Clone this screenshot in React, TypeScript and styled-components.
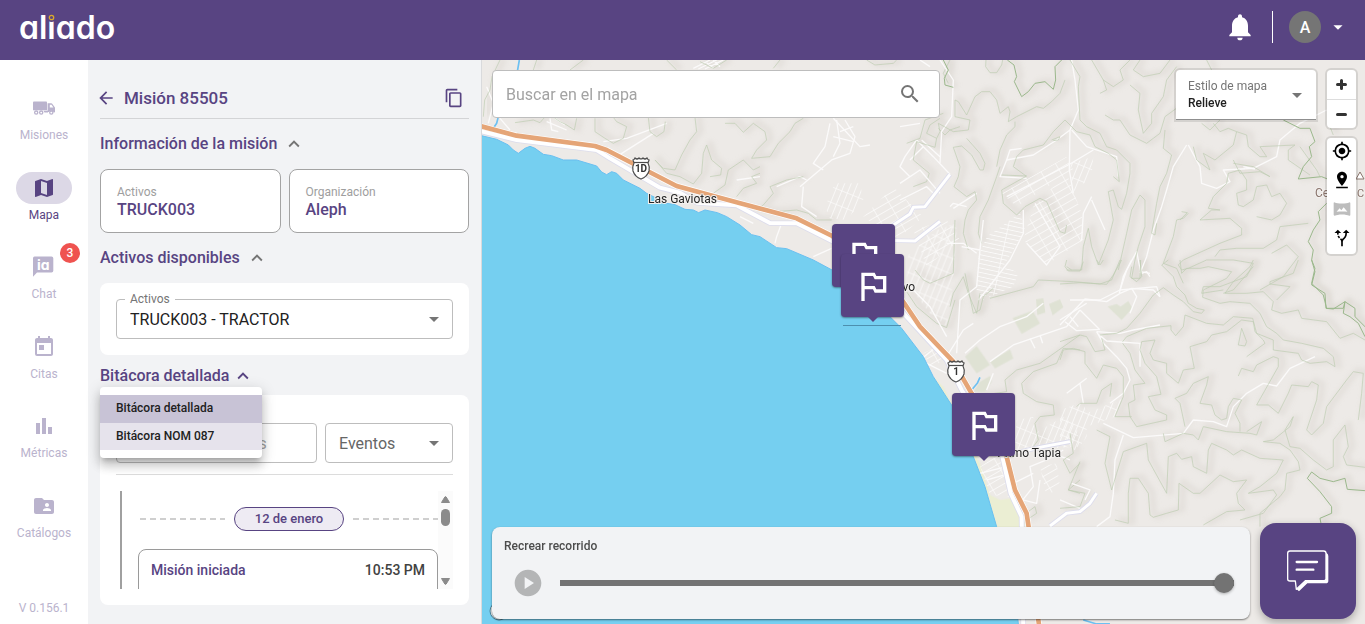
import React from 'react';
import styled, { createGlobalStyle } from 'styled-components';
import {
  MdAltRoute,
  MdArrowBack,
  MdArrowDropDown,
  MdContentCopy,
  MdExpandLess,
  MdFolderShared,
  MdMap,
  MdMyLocation,
  MdNotifications,
  MdOutlinedFlag,
  MdPinDrop,
  MdPlayCircle,
  MdSearch,
  MdToday,
  MdVrpano,
} from 'react-icons/md';

const purple = '#584482';
const lilac = '#bab3cd';

const GlobalStyle = createGlobalStyle`
  * { box-sizing: border-box; }
  body {
    margin: 0;
    font-family: Roboto, "Liberation Sans", sans-serif;
    color: #212121;
    overflow: hidden;
  }
  button, input, select { font-family: inherit; }
  button { border: 0; padding: 0; background: none; cursor: pointer; }
`;

/* ---------- shell ---------- */

const Shell = styled.div`
  display: flex;
  flex-direction: column;
  height: 100vh;
`;

const Header = styled.header`
  flex: none;
  display: flex;
  align-items: center;
  justify-content: space-between;
  height: 60px;
  padding: 0 16px 6px 19px;
  background: ${purple};
  color: #fff;
`;

const Logo = styled.a`
  position: relative;
  padding-top: 2px;
  color: #fff;
  font: 600 32px/40px Inter, sans-serif;
  font-feature-settings: "cv11";
  text-decoration: none;
`;

const LogoRing = styled.svg`
  position: absolute;
  left: 28px;
  top: 7px;
  width: 9px;
  height: 9px;
`;

const HeaderTools = styled.div`
  display: flex;
  align-items: center;
`;

const HeaderButton = styled.button`
  display: flex;
  color: #fff;
`;

const HeaderRule = styled.span`
  width: 1px;
  height: 32px;
  margin: 0 16px;
  background: #fff;
`;

const Avatar = styled.span`
  display: grid;
  place-items: center;
  width: 32px;
  height: 32px;
  margin-right: 6px;
  border-radius: 50%;
  background: #757575;
  font-size: 16px;
  font-weight: 500;
`;

const Body = styled.div`
  flex: 1;
  display: flex;
  min-height: 0;
`;

/* ---------- navigation ---------- */

const Nav = styled.nav`
  flex: none;
  display: flex;
  flex-direction: column;
  width: 88px;
  padding: 32px 0 6px;
  background: #fff;
`;

const NavList = styled.ul`
  flex: 1;
  display: flex;
  flex-direction: column;
  justify-content: space-between;
  margin: 0;
  padding: 0;
  list-style: none;
`;

const NavLink = styled.a<{ $active?: boolean }>`
  position: relative;
  display: flex;
  flex-direction: column;
  align-items: center;
  color: ${(p) => (p.$active ? purple : lilac)};
  font-size: 12px;
  line-height: 22px;
  text-decoration: none;
`;

const NavPill = styled.span<{ $active?: boolean }>`
  display: grid;
  place-items: center;
  width: 56px;
  height: 32px;
  border-radius: 16px;
  background: ${(p) => (p.$active ? '#dcd8e6' : 'transparent')};
`;

const NavBadge = styled.span`
  position: absolute;
  top: -8px;
  right: 8px;
  width: 20px;
  border-radius: 10px;
  background: #ef5350;
  color: #fff;
  font-weight: 500;
  line-height: 20px;
  text-align: center;
`;

const Version = styled.p`
  margin: 0;
  padding-top: 54px;
  color: ${lilac};
  font-size: 12px;
  line-height: 20px;
  text-align: center;
`;

/* ---------- mission panel ---------- */

const Panel = styled.aside`
  flex: none;
  width: 394px;
  padding: 18px 12px;
  border-right: 1px solid #d9dadc;
  background: #f2f3f5;
`;

const PanelHead = styled.div`
  display: flex;
  align-items: center;
  height: 41px;
  border-bottom: 1px solid #d3d4d6;
  color: ${purple};
`;

const PanelTitle = styled.h1`
  flex: 1;
  margin: 0 0 0 8px;
  font-size: 17px;
  font-weight: 500;
  line-height: 24px;
`;

const IconButton = styled.button`
  display: flex;
  color: inherit;
`;

const CopyButton = styled(IconButton)`
  margin-right: 5px;
`;

const BackButton = styled(IconButton)`
  margin-left: -4px;
`;

const SectionHead = styled.h2<{ $tight?: boolean }>`
  position: relative;
  margin: ${(p) => (p.$tight ? '9px 0 7px' : '13px 0')};
  font-size: 16px;
  font-weight: 500;
  line-height: 24px;
`;

const SectionToggle = styled.button<{ $tight?: boolean }>`
  display: flex;
  align-items: center;
  gap: ${(p) => (p.$tight ? '2px' : '6px')};
  color: ${purple};
  font-size: 16px;
  font-weight: 500;
  line-height: 24px;

  svg { color: ${(p) => (p.$tight ? purple : '#757575')}; }
`;

const FactGrid = styled.dl`
  display: grid;
  grid-template-columns: 1fr 1fr;
  gap: 8px;
  margin: 0;
`;

const Fact = styled.div`
  height: 64px;
  padding: 13px 16px;
  border: 1px solid #a3a3a3;
  border-radius: 8px;
  background: #fff;
`;

const FactLabel = styled.dt`
  color: #9e9e9e;
  font-size: 12px;
  line-height: 18px;
`;

const FactValue = styled.dd`
  margin: 0;
  color: ${purple};
  font-size: 16px;
  font-weight: 500;
  line-height: 18px;
`;

const Card = styled.div<{ $log?: boolean }>`
  padding: ${(p) => (p.$log ? '28px 16px 16px' : '16px')};
  border-radius: 8px;
  background: #fff;
`;

const Field = styled.div`
  position: relative;
  min-width: 0;
  color: #757575;

  svg {
    position: absolute;
    right: 7px;
    top: 8px;
    pointer-events: none;
  }
`;

const FieldLabel = styled.label`
  position: absolute;
  left: 9px;
  top: -8px;
  padding: 0 5px;
  background: #fff;
  color: #757575;
  font-size: 12px;
  line-height: 16px;
`;

const Select = styled.select<{ $muted?: boolean }>`
  display: block;
  width: 100%;
  height: 40px;
  padding: 0 13px;
  border: 1px solid #bdbdbd;
  border-radius: 4px;
  appearance: none;
  background: #fff;
  color: ${(p) => (p.$muted ? '#666' : '#212121')};
  font-size: 16px;
`;

const TextInput = styled.input`
  display: block;
  width: 100%;
  height: 40px;
  padding: 0 13px;
  border: 1px solid #bdbdbd;
  border-radius: 4px;
  background: #fff;
  font-size: 16px;

  &::placeholder { color: #a2a2a2; opacity: 1; }
`;

const Filters = styled.div`
  display: grid;
  grid-template-columns: 201px 1fr;
  gap: 8px;
  padding-bottom: 11px;
  border-bottom: 1px solid #dcdcdc;
`;

const Menu = styled.div`
  position: absolute;
  z-index: 2;
  left: 0;
  top: 23px;
  width: 162px;
  padding: 8px 0;
  border-radius: 4px;
  background: #fff;
  box-shadow: 0 5px 5px -3px rgba(0, 0, 0, .2), 0 8px 10px 1px rgba(0, 0, 0, .14), 0 3px 14px 2px rgba(0, 0, 0, .12);
`;

const MenuItem = styled.button<{ $selected?: boolean }>`
  display: block;
  width: 100%;
  padding: 0 16px ${(p) => (p.$selected ? '2px' : '1px')};
  background: ${(p) => (p.$selected ? '#c8c3d6' : '#e6e3ec')};
  color: #212121;
  font-size: 12px;
  font-weight: 500;
  line-height: 26px;
  text-align: left;
`;

const LogViewport = styled.div`
  display: flex;
  height: 98px;
  margin-top: 16px;
  padding-left: 4px;
  overflow: hidden;
`;

const LogBody = styled.div`
  flex: 1;
  padding: 16px 0 0 16px;
  border-left: 2px solid #a0a0a0;
`;

const DayRow = styled.div`
  display: flex;
  align-items: center;
  gap: 9px;
  padding-left: 2px;
`;

const DayDashes = styled.span`
  flex: 1;
  height: 2px;
  background: repeating-linear-gradient(to right, #cfcfcf 0 6px, transparent 6px 10px);
`;

const DayChip = styled.span`
  width: 110px;
  border: 1px solid ${purple};
  border-radius: 12px;
  background: #eeebf3;
  color: ${purple};
  font-size: 13px;
  font-weight: 500;
  line-height: 22px;
  text-align: center;
`;

const LogEntry = styled.div`
  display: flex;
  justify-content: space-between;
  height: 80px;
  margin-top: 18px;
  padding: 10px 12px;
  border: 1px solid #9a9a9a;
  border-radius: 8px;
  color: #424242;
  font-size: 14px;
  font-weight: 500;
  line-height: 20px;
`;

const LogName = styled.span`
  color: ${purple};
`;

const ScrollRail = styled.div`
  display: flex;
  flex-direction: column;
  align-items: center;
  width: 15px;
  padding: 5px 0 4px;
  background: #fbfbfb;
`;

const ScrollThumb = styled.span`
  width: 9px;
  height: 17px;
  margin: 6px 0 auto;
  border-radius: 5px;
  background: #8b8b8b;
`;

/* ---------- map ---------- */

const MapArea = styled.main`
  position: relative;
  flex: 1;
  display: flex;
  flex-direction: column;
  justify-content: space-between;
  min-width: 0;
  overflow: hidden;
  background: #edeae7;
`;

const Terrain = styled.svg`
  position: absolute;
  inset: 0;
  width: 100%;
  height: 100%;
`;

const Marker = styled.button<{ $x: number; $y: number }>`
  position: absolute;
  left: ${(p) => p.$x}px;
  top: ${(p) => p.$y}px;
  display: grid;
  place-items: center;
  width: 63px;
  height: 63px;
  border-radius: 4px;
  background: ${purple};
  color: #fff;
  box-shadow: 0 1px 2px rgba(0, 0, 0, .4);

  &::after {
    content: "";
    position: absolute;
    left: 27px;
    top: 63px;
    border: 5px solid transparent;
    border-top-color: ${purple};
    border-bottom: 0;
  }
`;

const MapTop = styled.div`
  position: relative;
  display: flex;
  align-items: flex-start;
  justify-content: space-between;
  padding: 10px 9px 0 10px;
`;

const SearchBox = styled.div`
  display: flex;
  align-items: center;
  width: 448px;
  height: 48px;
  padding: 0 17px 0 13px;
  border: 1px solid #bdbdbd;
  border-radius: 4px;
  background: #fff;
  color: #757575;
`;

const SearchInput = styled.input`
  flex: 1;
  min-width: 0;
  padding: 0;
  border: 0;
  outline: 0;
  background: none;
  font-size: 16px;

  &::placeholder { color: #a3a3a3; opacity: 1; }
`;

const MapTools = styled.div`
  display: flex;
  align-items: flex-start;
  gap: 11px;
`;

const StyleField = styled.div`
  position: relative;
  width: 140px;
  height: 50px;
  padding: 8px 12px 0;
  border-bottom: 1px solid #8f8f8f;
  border-radius: 4px 4px 0 0;
  background: #fff;
  color: #757575;
  box-shadow: 0 0 0 2px rgba(0, 0, 0, .1);

  svg { position: absolute; right: 7px; top: 13px; pointer-events: none; }
`;

const StyleLabel = styled.label`
  display: block;
  font-size: 12px;
  line-height: 16px;
`;

const StyleSelect = styled.select`
  display: block;
  width: 100%;
  height: 18px;
  padding: 0;
  border: 0;
  appearance: none;
  background: none;
  color: #212121;
  font-size: 12px;
  font-weight: 500;
`;

const ControlStack = styled.div`
  display: flex;
  flex-direction: column;
  gap: 10px;
`;

const ControlGroup = styled.div`
  display: flex;
  flex-direction: column;
  width: 29px;
  border-radius: 4px;
  background: #fff;
  box-shadow: 0 0 0 2px rgba(0, 0, 0, .1);
`;

const ControlButton = styled.button<{ $ruled?: boolean; $off?: boolean; $tool?: boolean }>`
  display: grid;
  place-items: center;
  height: 29px;
  padding-bottom: ${(p) => (p.$tool ? '3px' : '0')};
  border-top: ${(p) => (p.$ruled ? '1px solid #ddd' : '0')};
  color: ${(p) => (p.$off ? '#bdbdbd' : '#000')};
`;

const MapBottom = styled.div`
  position: relative;
  display: flex;
  align-items: flex-end;
  gap: 10px;
  padding: 0 9px 5px 10px;
`;

const Player = styled.section`
  flex: 1;
  height: 92px;
  padding: 10px 16px 0 12px;
  border-radius: 8px;
  background: #f2f3f5;
  box-shadow: 0 1px 2px rgba(0, 0, 0, .5);
`;

const PlayerLabel = styled.label`
  display: block;
  color: #4c4c4c;
  font-size: 12px;
  font-weight: 500;
  line-height: 18px;
`;

const PlayerRow = styled.div`
  display: flex;
  align-items: center;
  gap: 16px;
  margin-top: 12px;
  padding-left: 8px;
`;

const PlayButton = styled.button`
  display: flex;
  color: #b4b5b6;
`;

const Scrubber = styled.input`
  flex: 1;
  height: 20px;
  margin: 0;
  appearance: none;
  background: linear-gradient(#737373, #737373) center / 100% 6px no-repeat;
  border-radius: 3px;

  &::-webkit-slider-thumb {
    appearance: none;
    width: 20px;
    height: 20px;
    border-radius: 50%;
    background: #737373;
    box-shadow: 0 1px 3px rgba(0, 0, 0, .3);
  }
`;

const ChatButton = styled.button`
  display: grid;
  place-items: center;
  width: 96px;
  height: 96px;
  border-radius: 16px;
  background: ${purple};
  box-shadow: 0 3px 8px rgba(0, 0, 0, .3);
`;

/* ---------- icons ---------- */

const TruckIcon = () => (
  <svg width="24" height="24" viewBox="0 0 24 24" fill="currentColor">
    <path d="M1 6.500q0-.9.900-.9h12.200q.9 0 .9.900v7.700H1z" />
    <path fillRule="evenodd" d="M15.600 7.200h3.700q.6 0 .9.500l2.400 3.300q.4.500.4 1v3.700q0 .8-.8.800h-.5a2.600 2.600 0 0 0-4.600-.6h-1.500zM17.800 8.800v2.600h3.600l-1.900-2.600z" />
    <path d="M11.500 14.800h4.500v1.700h-3.500z" />
    <g fill="#fff" stroke="currentColor" strokeWidth="1.300">
      <circle cx="4.200" cy="16.600" r="1.600" />
      <circle cx="9.200" cy="16.600" r="1.600" />
      <circle cx="19.300" cy="16.600" r="1.600" />
    </g>
  </svg>
);

const AssistantIcon = () => (
  <svg width="24" height="24" viewBox="0 0 24 24">
    <path fill="currentColor" d="M2.500 1.500h17q1.800 0 1.800 1.800v12.400q0 1.800-1.800 1.800H5l-4 4.300V3.300q0-1.800 1.500-1.800z" />
    <text x="11.300" y="14.500" textAnchor="middle" fill="#fff" fontFamily="Inter, sans-serif" fontSize="14" fontWeight="700" style={{ fontFeatureSettings: '"cv11"' }}>
      ia
    </text>
  </svg>
);

const BarsIcon = () => (
  <svg width="24" height="24" viewBox="0 0 24 24" fill="currentColor">
    <path d="M4 9h4v11H4zM10 4h4v16h-4zM16 13h4v7h-4z" />
  </svg>
);

const PlusIcon = () => (
  <svg width="11" height="11" viewBox="0 0 11 11" stroke="#333" strokeWidth="3" strokeLinecap="round">
    <path d="M1.500 5.500h8M5.500 1.500v8" />
  </svg>
);

const MinusIcon = () => (
  <svg width="11" height="11" viewBox="0 0 11 11" stroke="#333" strokeWidth="3" strokeLinecap="round">
    <path d="M1.500 5.500h8" />
  </svg>
);

const ScrollArrow = ({ down }: { down?: boolean }) => (
  <svg width="9" height="7" viewBox="0 0 9 7" fill="#8b8b8b" stroke="#8b8b8b" strokeLinejoin="round">
    <path d={down ? 'M.5.500h8L5.200 6q-.7.800-1.400 0z' : 'M.5 6.500h8L5.200 1q-.7-.8-1.400 0z'} />
  </svg>
);

const BubbleIcon = () => (
  <svg width="42" height="42" viewBox="0 0 126 126" fill="none" stroke="#fff">
    <path d="M117 8q7 2 7 10v74q0 8-8 8H61L36 124l-7-6 27-26h53q8 0 8-8z" fill="#fff" stroke="none" />
    <path d="M9 3h101q7 0 7 7v76q0 6-7 6H55L28 118l-3-25H9q-7 0-7-6V10q0-7 7-7z" fill={purple} strokeWidth="4" strokeLinejoin="round" />
    <path d="M29 36h61M29 59h50" strokeWidth="7" strokeLinecap="round" />
  </svg>
);

/* ---------- terrain drawing ---------- */

const coast =
  '0,226 50,238 85,255 100,270 115,280 135,265 150,259 165,265 190,283 215,287 250,300 290,300 350,318 365,336 380,344 395,335 410,340 430,360 480,385 500,400 560,430 585,434 615,448 640,450 656,458 675,450 712,458 740,470 780,495 815,524 840,530 890,563 920,566 1000,600 1056,630 1230,770 1265,805 1330,890 1360,950 1418,1040 1480,1190 1515,1280 1550,1400 1614,1680 1616,1700';

const highway =
  '0,198 110,227 345,258 380,270 590,378 700,408 950,475 1057,528 1200,630 1273,730 1320,800 1420,905 1475,1000 1540,1100 1580,1190 1605,1290 1640,1360 1646,1400 1650,1500 1678,1700';

const coastRoad =
  '0,213 110,240 350,270 390,295 540,383 600,398 650,428 770,436 870,489 950,490 1060,545 1200,670 1275,765 1400,900 1445,990 1565,1180 1592,1300 1625,1370 1630,1700';

interface Tile {
  at: [number, number];
  green: string[];
  dark?: string[];
  road: string[];
}

const tiles: Tile[] = [
  {
    at: [480, 60],
    green: [
      'M10,170 L14,120 30,90 36,50 60,0',
      'M105,188 L160,180 180,188 200,165 215,150 225,175 240,185 260,195 283,210 290,175',
      'M345,175 L345,215 375,235 400,250 430,235 440,200 410,185 400,172',
      'M505,172 L510,215 530,230 552,215 556,185',
      'M645,172 L650,215 630,240 605,285 585,330 550,325 525,300 560,340 600,350 640,372 665,340 670,280 680,255 695,300 725,325 722,345 690,350',
      'M735,190 L765,190 790,217 820,190 855,215 860,240 830,270 815,295 870,290 895,250 930,215 945,190 970,175',
      'M700,400 L735,375 745,330 790,300 820,330 840,320 M770,410 L790,385 830,370 815,350 840,340',
      'M850,435 L880,400 870,380 920,360 970,350 M850,435 L830,450 890,455 950,450 985,460 1010,480 1055,480',
      'M1300,380 L1340,365 1348,340 1300,300 1310,245 1365,262 1370,235 1340,220 1350,195 1380,175',
      'M900,0 L880,25 M660,5 L700,25 740,0 M560,0 L590,30 M310,0 L270,30 M160,30 L170,0',
      'M1305,630 L1330,660 1350,670 1420,640 1425,480 M1280,695 L1310,740 1370,790 1400,803 1425,720',
      'M1440,200 L1410,210 1395,225 1375,205',
      'M1410,0 L1390,40 1405,70 M1160,0 L1185,15 1240,10 1250,0',
    ],
    road: [
      'M960,380 L1055,300 1110,280 1125,230 1095,180 M970,380 L965,440 1010,470 M1030,330 L1000,310 1035,260 1050,190',
      'M890,380 L960,350 980,360 M370,245 L440,235 560,190 M410,290 L520,220',
      'M1310,240 L1360,290 1410,343 M1310,240 L1275,290 1260,320 1290,350 M1325,240 L1380,290 M1290,300 L1330,260',
      'M905,490 L890,530 885,550 M1000,590 L1055,565 M780,470 L820,490 M840,350 L770,360 M200,185 L260,210 M20,80 L40,130 25,190',
      'M1070,180 L1080,250 1060,290 M1120,200 L1080,215 M1060,230 L1120,245',
      'M640,25 L690,0 M655,27 L710,0 M675,27 L730,0 M700,0 L720,20 M680,8 L700,25',
      'M210,175 L215,210 235,215 M225,175 L255,195 M60,175 L90,210 M1060,175 L1140,260 1170,255',
    ],
  },
  {
    at: [900, 60],
    green: [
      'M258,0 L257,20 270,38 290,38 305,15 308,0',
      'M110,235 L120,215 115,190 160,215 205,210 210,180 165,170 165,120 175,125 200,165 225,110 245,95 270,95 290,120 300,160 325,140 330,155 325,185 350,170 410,140 430,145 455,125 480,100 495,60',
      'M160,262 L185,258 215,285 240,330 250,330 255,310 240,280 200,235 M160,262 L180,320 175,350 162,380 200,410 225,395 230,420 205,450 195,480 190,520 205,570',
      'M300,320 L290,350 265,420 240,470 235,520 245,550 M345,185 L345,200 320,225 300,270 290,320',
      'M378,348 L340,320 350,290 370,270 430,255 460,215 495,180 530,215 570,225 585,260 625,280 650,300 658,365 640,350',
      'M305,345 L380,348 305,390 310,430 350,465 375,440 420,415 440,425 480,515 495,520 500,495',
      'M510,0 L540,50 535,80 540,180 560,200 600,220 620,260 650,270 690,310 690,340 680,400 665,448 655,440 640,390 625,395 640,480 625,540 595,615 575,560 565,505 550,560 545,630 500,630',
      'M615,165 L640,180 660,180 690,225 740,250 780,220 795,170 850,130 855,95 880,75',
      'M690,75 L720,100 715,150 730,220 755,190 755,160 790,110 800,60 830,20',
      'M795,210 L790,265 815,285 800,340 780,380 770,430 755,520 765,525 770,490',
      'M655,630 L680,520 695,450 720,405 735,420 735,500 715,560 705,600 695,655 720,655 722,600',
      'M270,715 L400,680 415,660 520,665 600,672 635,660 660,600',
      'M865,460 L850,475 830,480 820,530 790,610 830,625 850,670 M845,455 L862,458 840,480',
      'M900,480 L935,450 960,450 925,445 940,410 980,370 985,340 1020,330 1040,360 1040,390 1010,400 1015,435 1030,440 1060,420 1070,380 1100,375 1115,410 1140,400 1160,430 1140,465 1115,480 1070,470',
      'M900,480 L990,475 1025,505 1025,525 960,550 850,600 835,615 845,630 865,625 920,600 1000,600 1060,610 1040,650 960,680 910,680 905,700 970,690',
      'M945,590 L960,570 1010,565 1090,565 1130,540 1140,500 1225,490',
      'M1115,580 L1160,555 1195,590 1150,650 1080,690 M1060,620 L1000,690 970,700',
      'M880,260 L890,300 930,330 910,280 945,300 1000,255 1010,215 985,205 960,215 940,190',
      'M1010,215 L1040,225 1045,260 1080,290 1100,290 1080,260 1185,255 1165,270 1165,300 1230,345',
      'M455,240 L480,230 475,240 460,242 M575,0 L610,60 620,90 600,100 M690,0 L660,30 670,60 640,80 610,60',
      'M20,250 L60,235 75,180 130,160',
      'M500,620 L515,630 M150,740 L160,700 190,650 205,700 230,760 240,700',
      'M720,0 L700,30 730,50 780,40 810,0 M920,0 L935,30',
      'M905,190 L930,210 960,180 M1000,300 L1020,340 1080,335 1110,350 1060,320 1000,310',
      'M1200,260 L1250,330 1260,350 M1290,200 L1300,225',
    ],
    dark: [
      'M130,0 L145,30 133,55 135,75 160,82',
      'M322,0 L342,15 350,50 343,65 365,110 385,95 405,70 435,65 460,88 467,60 465,20 485,0',
      'M1150,180 L1200,205 1230,205 1245,245 1228,260 1235,290 1210,320 1195,357 1265,350 1290,360',
      'M1280,430 L1255,455 1260,480 1240,510 1225,545 1240,570 1235,600 1245,625 1235,670 1270,705 1280,745 1330,745 1335,725 1365,745 1365,770 1395,800',
    ],
    road: [
      'M515,0 L525,60 535,150 510,210 508,330 520,400 M510,210 L470,240 400,285 320,300 300,350 380,355 M515,210 L560,260 650,290 655,350',
      'M320,300 L330,270 365,265 M370,450 L370,520 330,600 260,690 235,720 M140,550 L190,550 230,580 M405,430 L480,560 440,615 380,550',
      'M120,0 L160,60 155,170 125,215 120,310 M60,0 L90,20 M860,255 L820,320 800,390 785,440 760,510 740,590 720,640 M865,255 L900,320 905,370 950,385 990,365 970,330 1060,325 1130,290 1140,240 1200,190 1280,150',
      'M510,720 L600,720 660,690 770,680 780,710 M660,690 L680,630 710,575 722,635 750,640 M480,780 L560,730',
      'M575,420 L615,510 M545,540 L550,460 575,410 M200,440 L160,430 150,440 M160,445 L230,400',
      'M1030,320 L1065,327 M0,200 L60,190',
      'M320,410 L505,315 580,270 M0,370 L60,330 120,400 M0,420 L80,380 100,400',
    ],
  },
  {
    at: [780, 220],
    green: [
      'M575,530 L680,515 675,480 710,450 780,430 900,345',
      'M900,390 L850,385 830,430 760,455 725,490 730,520 770,545 820,555 823,585 780,590 765,610 775,660 760,680',
      'M870,640 L880,700 850,720 870,760 900,730 M900,780 L865,810 900,820',
      'M740,900 L770,880 765,860 745,875 M555,160 L580,280 600,270 610,230 640,205',
    ],
    road: [
      'M555,400 L600,360 660,320 740,290 790,250 M630,425 L700,375 860,320 900,270 M750,355 L765,385 M780,345 L788,370',
      'M500,410 L550,330 580,310 M545,80 L600,90 590,200 540,240 530,400 M600,90 L610,0',
      'M700,690 L750,700 M790,690 L870,720 M640,460 L620,510 M600,760 L680,740 M620,780 L690,760',
      'M720,850 L760,800 750,740 800,720 850,690 M690,830 L770,850 780,780 M700,790 L760,760',
      'M380,190 L450,260 500,350 M440,430 L500,460 M420,420 L470,380',
    ],
  },
  {
    at: [1060, 260],
    green: [
      'M20,0 L15,20 25,33 60,33 70,5 M110,0 L120,15 130,0',
      'M0,72 L60,68 140,73 160,45 185,0 M215,20 L210,50 230,65 245,50 240,0',
      'M325,0 L305,15 340,50 350,80 375,105 385,130 410,145 433,150 425,160 400,155 370,125 340,105 310,83 280,105 240,160 200,205 170,220 120,225',
      'M360,0 L365,40 380,25 420,25 445,20 515,35 500,55 430,90 428,112 480,130 510,125 570,130 600,160 620,200 650,220 670,240 725,250 790,265 820,290 825,320 800,305 750,310 725,300 715,280 640,270 640,240 590,220 578,175 520,170 490,195 440,190 375,165 370,200 347,227 333,210 333,197 260,205 200,230 188,245',
      'M580,0 L570,20 520,65 495,100 560,100 610,95 640,125 635,150 665,160 715,150 725,175 800,185 840,235 880,220 915,240',
      'M715,0 L700,40 630,65 630,72 690,80 650,120',
      'M188,250 L210,280 225,330 255,370 220,375 225,420 205,430 210,470 230,500 320,480 320,465 285,450 265,410 303,403 290,350 255,310 240,270 245,245 285,240 270,280 280,300 320,310 320,340 355,370 370,330 403,325 390,260 440,245 455,225 500,215 545,180 580,185 585,215 610,240 615,250 560,290',
      'M0,245 L60,225 80,230 105,275 135,270 125,235 M10,270 L40,265 75,275 75,310 110,355 130,315 170,325 190,350 190,410 165,470 215,470',
      'M0,300 L10,270 M50,440 L60,430 110,430 125,390 155,370 150,410',
      'M375,500 L360,430 345,415 380,400 400,370 445,350 440,375 420,430 455,435 465,465 485,480 500,475 505,440 520,415 545,420 525,460 540,490 540,515',
      'M545,205 L560,245 555,258 535,255 545,205 M535,348 L545,325 580,335 590,315 640,290 655,295 655,320 590,435 625,435 655,460 685,400 695,375 745,380 755,365 775,375 770,420 740,510 755,525 790,490 800,440 860,360 880,335 910,340 905,400 895,480',
      'M310,520 L315,545 370,520 400,525 415,540 430,500 500,515 570,520 590,525 605,485 560,515',
      'M700,470 L690,500 640,540 610,545 660,550 690,570 715,605 720,630 680,640 675,690 660,710 600,760 600,800',
      'M110,510 L150,530 135,610 155,690 170,640 190,575 260,550 265,600 320,700 325,590 350,580 365,598 395,590 400,620 440,640 445,570 455,550 500,570 520,585 545,570 600,595 670,600 650,640 600,680 565,700 640,690 650,705 610,760 540,780',
      'M165,780 L205,790 205,700 210,655 235,655 265,700 270,765 280,772 320,760 355,750 357,670 400,700 420,700 480,645 520,665 560,660 530,700 535,730 555,750 500,755 430,795',
      'M700,470 L675,510 690,560 720,565 760,600 800,630 820,620 820,540 855,495 865,560 850,590 860,615 915,622',
      'M60,605 L25,690 75,700 60,740 0,745',
    ],
    dark: [
      'M755,0 L765,35 755,75 795,100 798,145 820,147 855,125 850,160 870,170 895,190 915,230',
      'M915,692 L862,688 855,655 820,665 780,655 755,636 742,655 780,695 815,740 815,760 780,775 785,800',
    ],
    road: [
      'M110,215 L130,250 170,290 200,325 210,360 190,400 150,430 M130,490 L220,533 370,520 400,480 460,485 500,500 520,440 560,400 610,370 650,378 690,325 765,290',
      'M190,525 L165,600 160,700 150,770 110,800 M0,195 L75,117 140,125 180,100 215,85 280,90 300,110 M215,0 L190,50 178,100',
      'M110,215 L180,220 220,210 300,195 M118,225 L140,243 240,250 240,320 M245,40 L260,35 270,50 M215,85 L230,110 210,160',
      'M60,150 L118,208 50,212 15,185 M30,170 L55,200 M20,400 L80,355 M60,370 L70,430',
      'M35,670 L90,690 75,720 M0,720 L60,745',
    ],
  },
];

const blocks: { at: [number, number]; d: string; fill: string }[] = [
  { at: [780, 220], d: 'M385,105 L470,30 530,10 520,180 500,320 450,280 380,190 Z', fill: 'streetsA' },
  { at: [480, 60], d: 'M1035,440 L1065,370 1140,370 1150,420 1100,480 1050,475 Z', fill: 'streetsA' },
  { at: [480, 60], d: 'M1150,470 L1240,380 1330,470 1250,540 Z M1300,510 L1400,480 1440,540 1340,620 Z', fill: 'streetsB' },
  { at: [900, 60], d: 'M260,530 L360,460 375,510 250,720 230,690 235,590 Z', fill: 'streetsC' },
  { at: [900, 60], d: 'M305,400 L500,290 520,330 350,440 Z', fill: 'streetsB' },
  { at: [900, 60], d: 'M400,440 L500,340 545,460 550,540 440,615 370,540 Z', fill: 'streetsB' },
  { at: [900, 60], d: 'M510,310 L580,290 575,350 520,395 Z', fill: 'streetsA' },
  { at: [900, 60], d: 'M320,620 L355,640 340,680 270,710 250,700 Z', fill: 'streetsC' },
  { at: [780, 220], d: 'M710,600 L760,590 765,640 850,590 890,620 900,680 700,690 Z', fill: 'streetsA' },
  { at: [1060, 260], d: 'M0,450 L70,425 80,460 190,415 165,470 80,500 80,530 50,575 0,530 Z', fill: 'streetsA' },
  { at: [780, 220], d: 'M600,740 L660,700 690,830 630,825 Z M430,400 L470,380 500,420 450,440 Z', fill: 'streetsB' },
  { at: [780, 220], d: 'M780,740 L830,730 840,800 800,830 Z', fill: 'streetsB' },
];

const MapDrawing = () => (
  <Terrain viewBox="482 60 883 564" preserveAspectRatio="xMinYMin slice" aria-hidden="true">
    <defs>
      <pattern id="streetsA" width="18" height="44" patternUnits="userSpaceOnUse" patternTransform="rotate(22)">
        <path d="M0 0H18M0 0V44" stroke="#fff" strokeWidth="5" />
      </pattern>
      <pattern id="streetsB" width="20" height="50" patternUnits="userSpaceOnUse" patternTransform="rotate(60)">
        <path d="M0 0H20M0 0V50" stroke="#fff" strokeWidth="5" />
      </pattern>
      <pattern id="streetsC" width="70" height="13" patternUnits="userSpaceOnUse" patternTransform="rotate(12)">
        <path d="M0 0H70M0 0V13" stroke="#fff" strokeWidth="5" />
      </pattern>
      <filter id="relief" x="0" y="0" width="100%" height="100%">
        <feGaussianBlur stdDeviation="2" />
      </filter>
    </defs>
    <rect x="482" y="60" width="883" height="564" fill="#edeae7" />

    <g filter="url(#relief)">
      {tiles.map((t, i) => (
        <g key={i} transform={`translate(${t.at[0] + 4} ${t.at[1] - 1}) scale(.3333)`} fill="none" stroke="#dbd8d1" strokeWidth="20" strokeLinejoin="round" opacity=".45">
          {[...t.green, ...(t.dark ?? [])].map((d) => <path key={d} d={d} />)}
        </g>
      ))}
    </g>

    <g fill="#dfe2d4">
      <g transform="translate(900 60) scale(.3333)">
        <path d="M408,718 L430,715 436,758 412,765 Z M447,732 L480,718 490,742 458,766 Z M623,740 L650,732 662,740 685,723 697,745 665,780 Z" />
      </g>
      <g transform="translate(780 220) scale(.3333)">
        <path d="M698,294 L758,272 780,310 725,342 Z M555,410 L590,378 630,435 590,460 Z M630,425 L690,388 700,415 645,445 Z M580,515 L600,485 630,468 635,485 615,515 Z" />
        <path fill="#ebeed3" d="M460,470 L490,500 520,560 600,730 630,825 660,840 690,835 735,900 760,1100 660,1100 Z" />
      </g>
    </g>

    <g opacity=".75">
      {blocks.map((b) => (
        <g key={b.d} transform={`translate(${b.at[0]} ${b.at[1]}) scale(.3333)`}>
          <path d={b.d} fill={`url(#${b.fill})`} />
        </g>
      ))}
    </g>

    {tiles.map((t, i) => (
      <g key={i} transform={`translate(${t.at[0]} ${t.at[1]}) scale(.3333)`} fill="none" strokeLinejoin="round">
        {t.road.map((d) => <path key={d} d={d} stroke="#fbfafa" strokeWidth="4" />)}
        {t.green.map((d) => <path key={d} d={d} stroke="#bccbb0" strokeWidth="2" />)}
        {(t.dark ?? []).map((d) => <path key={d} d={d} stroke="#9bb88c" strokeWidth="3" />)}
      </g>
    ))}

    <g transform="translate(480 60) scale(.3333)" fill="none" strokeLinejoin="round">
      <polygon points={`${coast} 0,1700`} fill="#75cff0" />
      <polyline points={coast} stroke="#68bff0" strokeWidth="3" />
      <path d="M118,0 L112,35 M55,170 L50,190 42,202 M1500,952 L1492,970 1475,990" stroke="#6cc0f2" strokeWidth="5" />
      <path d="M1810,1680 L1850,1692 1890,1692" stroke="#6cc0f2" strokeWidth="5" />
      {[
        '1150,560 1248,490 1290,462 1300,442 1335,440 1410,343',
        '1150,540 1305,543 1380,484',
        '1600,1180 1690,1160 1770,1145',
        '1710,1398 1760,1360 1800,1355 1830,1330 1850,1300',
      ].map((points) => (
        <React.Fragment key={points}>
          <polyline points={points} stroke="#dcdcec" strokeWidth="14" />
          <polyline points={points} stroke="#fff" strokeWidth="9" />
        </React.Fragment>
      ))}
      <polyline points={coastRoad} stroke="#dcdcec" strokeWidth="17" />
      <polyline points={coastRoad} stroke="#fff" strokeWidth="12" />
      <polyline points={highway} stroke="#fff" strokeWidth="18" />
      <polyline points={highway} stroke="#e5a577" strokeWidth="14" />
    </g>

    {[
      { x: 641, y: 168, label: '1D' },
      { x: 956, y: 371, label: '1' },
    ].map((s) => (
      <g key={s.label} transform={`translate(${s.x} ${s.y})`}>
        <path d="M-6-10Q-4-8-2-10Q0-8 2-10Q4-8 6-10Q7-8 8-8L7-5Q9-1 8 3Q6 9 0 11Q-6 9-8 3Q-9-1-7-5L-8-8Q-7-8-6-10z" fill="#fff" stroke="#4d4d4d" strokeWidth="1.200" />
        <path d="M-7-5.500H7" stroke="#4d4d4d" strokeWidth="1.200" />
        <text y="4" textAnchor="middle" fontSize="10" fontWeight="700" fill="#333">{s.label}</text>
      </g>
    ))}

    <g fontSize="12" fill="#262626" stroke="#f3f1ef" strokeWidth="2" paintOrder="stroke">
      <text x="648" y="203">Las Gaviotas</text>
      <text x="915" y="291" textAnchor="end">Nuevo</text>
      <text x="1061" y="457" textAnchor="end">Primo Tapia</text>
      <g fill="#8a746c">
        <text x="1315" y="197">Cerro</text>
        <text x="1357" y="197" fontSize="11">C</text>
      </g>
    </g>
    <path d="M1356 179l4-7 4 7z" fill="#fff" stroke="#8a746c" />
    <path d="M843 325.500h58" stroke="#4d8fae" />
    <circle cx="499" cy="611" r="9" fill="#e4e8ea" stroke="#4a8197" />
  </Terrain>
);

const markers = [
  { x: 350, y: 164 },
  { x: 359, y: 194 },
  { x: 470, y: 333 },
];

const navItems: { label: string; icon: React.ReactNode; active?: boolean; badge?: number }[] = [
  { label: 'Misiones', icon: <TruckIcon /> },
  { label: 'Mapa', icon: <MdMap size={24} />, active: true },
  { label: 'Chat', icon: <AssistantIcon />, badge: 3 },
  { label: 'Citas', icon: <MdToday size={24} /> },
  { label: 'Métricas', icon: <BarsIcon /> },
  { label: 'Catálogos', icon: <MdFolderShared size={24} /> },
];

export default function App() {
  return (
    <Shell>
      <GlobalStyle />
      <Header>
        <Logo href="#">
          aliado
          <LogoRing viewBox="0 0 9 9">
            <circle cx="4.500" cy="4.500" r="4.500" fill={purple} />
            <circle cx="4.500" cy="4.500" r="2.200" fill="none" stroke="#d9a92b" strokeWidth="1.300" />
          </LogoRing>
        </Logo>
        <HeaderTools>
          <HeaderButton aria-label="Notificaciones"><MdNotifications size={32} /></HeaderButton>
          <HeaderRule />
          <Avatar>A</Avatar>
          <HeaderButton aria-label="Cuenta"><MdArrowDropDown size={22} /></HeaderButton>
        </HeaderTools>
      </Header>

      <Body>
        <Nav>
          <NavList>
            {navItems.map((item) => (
              <li key={item.label}>
                <NavLink href="#" $active={item.active}>
                  <NavPill $active={item.active}>{item.icon}</NavPill>
                  {item.label}
                  {item.badge && <NavBadge>{item.badge}</NavBadge>}
                </NavLink>
              </li>
            ))}
          </NavList>
          <Version>V 0.156.1</Version>
        </Nav>

        <Panel>
          <PanelHead>
            <BackButton aria-label="Volver"><MdArrowBack size={20} /></BackButton>
            <PanelTitle>Misión 85505</PanelTitle>
            <CopyButton aria-label="Copiar"><MdContentCopy size={20} /></CopyButton>
          </PanelHead>

          <SectionHead>
            <SectionToggle>Información de la misión <MdExpandLess size={22} /></SectionToggle>
          </SectionHead>
          <FactGrid>
            <Fact>
              <FactLabel>Activos</FactLabel>
              <FactValue>TRUCK003</FactValue>
            </Fact>
            <Fact>
              <FactLabel>Organización</FactLabel>
              <FactValue>Aleph</FactValue>
            </Fact>
          </FactGrid>

          <SectionHead>
            <SectionToggle>Activos disponibles <MdExpandLess size={22} /></SectionToggle>
          </SectionHead>
          <Card>
            <Field>
              <Select id="asset"><option>TRUCK003 - TRACTOR</option></Select>
              <FieldLabel htmlFor="asset">Activos</FieldLabel>
              <MdArrowDropDown size={24} />
            </Field>
          </Card>

          <SectionHead $tight>
            <SectionToggle $tight aria-haspopup="menu">Bitácora detallada <MdExpandLess size={22} /></SectionToggle>
            <Menu role="menu">
              <MenuItem role="menuitem" $selected>Bitácora detallada</MenuItem>
              <MenuItem role="menuitem">Bitácora NOM 087</MenuItem>
            </Menu>
          </SectionHead>
          <Card $log>
            <Filters>
              <Field><TextInput placeholder="Buscar por eventos" aria-label="Buscar por eventos" /></Field>
              <Field>
                <Select $muted aria-label="Eventos"><option>Eventos</option></Select>
                <MdArrowDropDown size={24} />
              </Field>
            </Filters>
            <LogViewport>
              <LogBody>
                <DayRow>
                  <DayDashes />
                  <DayChip>12 de enero</DayChip>
                  <DayDashes />
                </DayRow>
                <LogEntry>
                  <LogName>Misión iniciada</LogName>
                  <time>10:53 PM</time>
                </LogEntry>
              </LogBody>
              <ScrollRail>
                <ScrollArrow />
                <ScrollThumb />
                <ScrollArrow down />
              </ScrollRail>
            </LogViewport>
          </Card>
        </Panel>

        <MapArea>
          <MapDrawing />
          {markers.map((m) => (
            <Marker key={`${m.x}-${m.y}`} $x={m.x} $y={m.y} aria-label="Parada">
              <MdOutlinedFlag size={40} />
            </Marker>
          ))}

          <MapTop>
            <SearchBox>
              <SearchInput placeholder="Buscar en el mapa" aria-label="Buscar en el mapa" />
              <IconButton aria-label="Buscar"><MdSearch size={24} /></IconButton>
            </SearchBox>
            <MapTools>
              <StyleField>
                <StyleLabel htmlFor="map-style">Estilo de mapa</StyleLabel>
                <StyleSelect id="map-style"><option>Relieve</option></StyleSelect>
                <MdArrowDropDown size={24} />
              </StyleField>
              <ControlStack>
                <ControlGroup>
                  <ControlButton aria-label="Acercar"><PlusIcon /></ControlButton>
                  <ControlButton aria-label="Alejar" $ruled><MinusIcon /></ControlButton>
                </ControlGroup>
                <ControlGroup>
                  <ControlButton $tool aria-label="Mi ubicación"><MdMyLocation size={20} /></ControlButton>
                  <ControlButton $tool aria-label="Ver punto"><MdPinDrop size={20} /></ControlButton>
                  <ControlButton $tool aria-label="Vista panorámica" $off><MdVrpano size={20} /></ControlButton>
                  <ControlButton $tool aria-label="Rutas alternas"><MdAltRoute size={20} /></ControlButton>
                </ControlGroup>
              </ControlStack>
            </MapTools>
          </MapTop>

          <MapBottom>
            <Player>
              <PlayerLabel htmlFor="replay">Recrear recorrido</PlayerLabel>
              <PlayerRow>
                <PlayButton aria-label="Reproducir"><MdPlayCircle size={32} /></PlayButton>
                <Scrubber id="replay" type="range" min={0} max={100} defaultValue={100} />
              </PlayerRow>
            </Player>
            <ChatButton aria-label="Abrir chat"><BubbleIcon /></ChatButton>
          </MapBottom>
        </MapArea>
      </Body>
    </Shell>
  );
}
